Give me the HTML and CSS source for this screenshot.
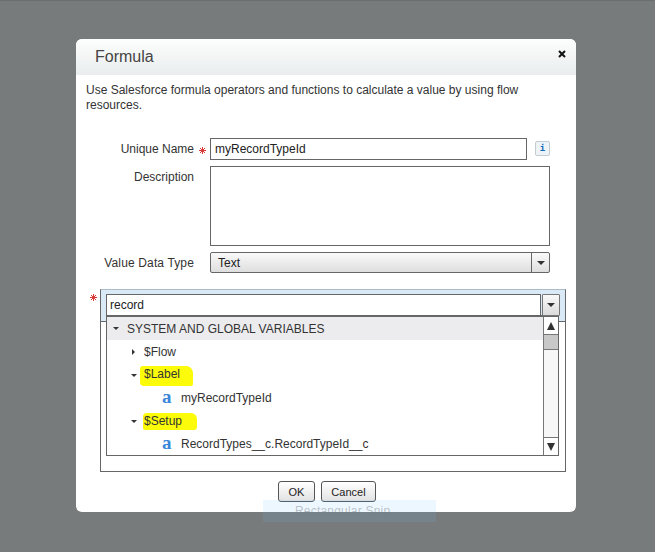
FILE: index.html
```html
<!DOCTYPE html>
<html lang="en">
<head>
  <meta charset="UTF-8" />
  <title>Formula</title>
  <link rel="stylesheet" href="styles.css">
</head>
<body>
  <div class="modal">
    <div class="modal-header">
      <h2>Formula</h2>
      <svg class="close" width="8" height="8" viewBox="0 0 8 8"><path d="M1 1L7 7M7 1L1 7" /></svg>
    </div>
    <div class="modal-body">
      <p class="intro">Use Salesforce formula operators and functions to calculate a value by using flow resources.</p>

      <div class="form-row name-row">
        <label>Unique Name</label>
        <span class="req"><svg class="star" width="7" height="7" viewBox="0 0 7 7"><path d="M3.5 0V7M0 3.5H7M1 1L6 6M6 1L1 6" /></svg></span>
        <div class="field">myRecordTypeId</div>
        <span class="info">i</span>
      </div>
      <div class="form-row desc-row">
        <label>Description</label>
        <span class="req"></span>
        <div class="field textarea"></div>
      </div>
      <div class="form-row type-row">
        <label>Value Data Type</label>
        <span class="req"></span>
        <div class="select">
          <span class="select-text">Text</span>
          <span class="select-btn"><i class="arrow-down"></i></span>
        </div>
      </div>

      <div class="formula-row">
        <span class="req formula-req"><svg class="star" width="7" height="7" viewBox="0 0 7 7"><path d="M3.5 0V7M0 3.5H7M1 1L6 6M6 1L1 6" /></svg></span>
        <div class="panel">
          <div class="combo">
            <div class="combo-input">record</div>
            <span class="combo-btn"><i class="arrow-down"></i></span>
          </div>
          <div class="dropdown">
            <div class="tree">
              <div class="tree-head"><i class="tw-open"></i>SYSTEM AND GLOBAL VARIABLES</div>
              <div class="tree-row lvl1"><i class="tw-closed"></i>$Flow</div>
              <div class="tree-row lvl1"><i class="tw-open"></i><span class="hl hl-label">$Label</span></div>
              <div class="tree-row lvl2"><span class="type-a">a</span>myRecordTypeId</div>
              <div class="tree-row lvl1"><i class="tw-open"></i><span class="hl hl-setup">$Setup</span></div>
              <div class="tree-row lvl2"><span class="type-a">a</span>RecordTypes__c.RecordTypeId__c</div>
            </div>
            <div class="scrollbar">
              <span class="sb-btn"><i class="sb-up"></i></span>
              <span class="sb-thumb"></span>
              <span class="sb-track"></span>
              <span class="sb-btn"><i class="sb-down"></i></span>
            </div>
          </div>
        </div>
      </div>

      <div class="actions">
        <button class="btn">OK</button>
        <button class="btn">Cancel</button>
      </div>
    </div>
  </div>
  <div class="snip">Rectangular Snip</div>
</body>
</html>
```

FILE: styles.css
```css
* {
  margin: 0;
  padding: 0;
  box-sizing: border-box;
}
html, body {
  height: 100%;
}
body {
  background: #787b7b;
  border-top: 1px solid #6c6e6e;
  font-family: "Liberation Sans", Arial, sans-serif;
  font-size: 12px;
  color: #333;
  overflow: hidden;
  padding: 38px 0 0 76px;
}
.modal {
  width: 500px;
  height: 473px;
  background: #fff;
  border-radius: 6px;
}
.modal-header {
  height: 36px;
  padding: 0 10px 0 19px;
  display: flex;
  justify-content: space-between;
  background: linear-gradient(#fdfefe, #e9eded);
  border-radius: 6px 6px 0 0;
}
.modal-header h2 {
  font-size: 16px;
  font-weight: normal;
  line-height: 35px;
  color: #444;
}
.close {
  margin-top: 11px;
  fill: none;
  stroke: #111;
  stroke-width: 2;
}
.modal-body {
  padding: 8px 10px 0;
}
.intro {
  line-height: 15px;
  width: 440px;
  height: 55px;
  color: #333;
}
.form-row {
  display: flex;
  align-items: flex-start;
}
.form-row label {
  width: 108px;
  text-align: right;
  flex-shrink: 0;
}
.req {
  width: 16px;
  flex-shrink: 0;
  display: flex;
  justify-content: center;
  padding-top: 9px;
}
.star {
  fill: none;
  stroke: #d83a3a;
  stroke-width: 1;
}
.field {
  height: 22px;
  width: 317px;
  border: 1px solid #666;
  padding-left: 4px;
  line-height: 20px;
  color: #222;
  background: #fff;
}
.name-row label {
  line-height: 22px;
}
.info {
  width: 15px;
  height: 15px;
  margin: 3px 0 0 8px;
  border: 1px solid #c3ccd3;
  border-radius: 2px;
  background: #eef3f8;
  color: #1468b8;
  font: bold 9px/13px "DejaVu Sans Mono", monospace;
  text-align: center;
}
.desc-row {
  margin-top: 6px;
}
.desc-row label {
  padding-top: 4px;
}
.textarea {
  width: 340px;
  height: 80px;
}
.type-row {
  margin-top: 6px;
}
.type-row label {
  line-height: 22px;
  letter-spacing: 0.14px;
}
.select {
  width: 340px;
  height: 21px;
  display: flex;
  border: 1px solid #666;
  border-radius: 2px;
  background: linear-gradient(#fafafa, #dedede);
  line-height: 20px;
}
.select-text {
  flex: 1;
  padding-left: 7px;
  color: #222;
}
.select-btn {
  width: 18px;
  border-left: 1px solid #666;
  display: flex;
  align-items: center;
  justify-content: center;
}
.arrow-down {
  width: 0;
  height: 0;
  border-left: 4px solid transparent;
  border-right: 4px solid transparent;
  border-top: 4px solid #333;
}
.formula-row {
  display: flex;
  margin-top: 15px;
}
.formula-req {
  width: 14px;
  padding-top: 5px;
}
.panel {
  width: 466px;
  height: 183px;
  border: 1px solid #666;
  border-top-color: #a9bcc8;
  background: linear-gradient(#d9e9f5 31px, #666 31px, #666 32px, #fff 32px);
  padding: 4px 0 0 5px;
}
.combo {
  display: flex;
  width: 454px;
  height: 22px;
}
.combo-input {
  width: 435px;
  border: 1px solid #666;
  background: #fff;
  padding-left: 3px;
  line-height: 20px;
  color: #222;
}
.combo-btn {
  width: 18px;
  margin-left: 1px;
  border: 1px solid #777;
  border-radius: 1px;
  background: linear-gradient(#fafafa, #dcdcdc);
  display: flex;
  align-items: center;
  justify-content: center;
}
.dropdown {
  width: 453px;
  height: 141px;
  margin-top: -1px;
  display: flex;
  background: #fff;
  border: 1px solid #666;
  border-top-width: 2px;
}
.tree {
  flex: 1;
}
.tree-head {
  height: 23px;
  background: #ececee;
  display: flex;
  align-items: center;
  padding-left: 6px;
}
.tree-head .tw-open {
  margin-right: 8px;
}
.tree-row {
  height: 23px;
  display: flex;
  align-items: center;
  padding-top: 1px;
}
.lvl1 {
  padding-left: 24px;
}
.lvl1 i {
  margin-right: 7px;
}
.lvl1 .tw-closed {
  margin-right: 9px;
}
.lvl2 {
  padding-left: 55px;
}
.tw-open {
  width: 0;
  height: 0;
  border-left: 3px solid transparent;
  border-right: 3px solid transparent;
  border-top: 3px solid #333;
}
.tw-closed {
  width: 0;
  height: 0;
  margin-left: 1px;
  border-top: 3px solid transparent;
  border-bottom: 3px solid transparent;
  border-left: 3px solid #333;
}
.hl {
  background: #fbfb0a;
}
.hl-label {
  padding: 1px 13px 5px 4px;
  margin: 2px 0 0 -4px;
  border-radius: 3px 7px 2px 4px;
}
.hl-setup {
  padding: 1px 15px 2px 1px;
  margin-left: -1px;
  border-radius: 4px 6px 3px 2px;
}
.type-a {
  width: 19px;
  font: bold 19px/16px "Liberation Serif", serif;
  color: #3a86d8;
  margin-top: -3px;
}
.scrollbar {
  width: 15px;
  display: flex;
  flex-direction: column;
  border-left: 1px solid #777;
}
.sb-btn {
  height: 17px;
  display: flex;
  align-items: center;
  justify-content: center;
  background: #fff;
}
.sb-thumb {
  height: 16px;
  background: #c8c8c8;
  border-top: 1px solid #777;
  border-bottom: 1px solid #777;
}
.sb-track {
  flex: 1;
  background: #f7f7f7;
  border-bottom: 1px solid #777;
}
.sb-up {
  border-left: 4px solid transparent;
  border-right: 4px solid transparent;
  border-bottom: 8px solid #333;
}
.sb-down {
  border-left: 4px solid transparent;
  border-right: 4px solid transparent;
  border-top: 8px solid #333;
}
.actions {
  display: flex;
  justify-content: center;
  gap: 6px;
  margin-top: 9px;
  padding-left: 2px;
}
.btn {
  height: 21px;
  padding: 0 9.5px;
  border: 1px solid #555;
  border-radius: 3px;
  background: linear-gradient(#fff, #e2e2e2);
  font: 11px "Liberation Sans", Arial, sans-serif;
  color: #222;
}
.snip {
  position: absolute;
  left: 263px;
  top: 500px;
  width: 173px;
  height: 22px;
  background: rgba(110, 190, 255, 0.12);
  color: rgba(120, 125, 130, 0.45);
  padding-left: 32px;
  line-height: 22px;
  letter-spacing: 0.2px;
}
```
